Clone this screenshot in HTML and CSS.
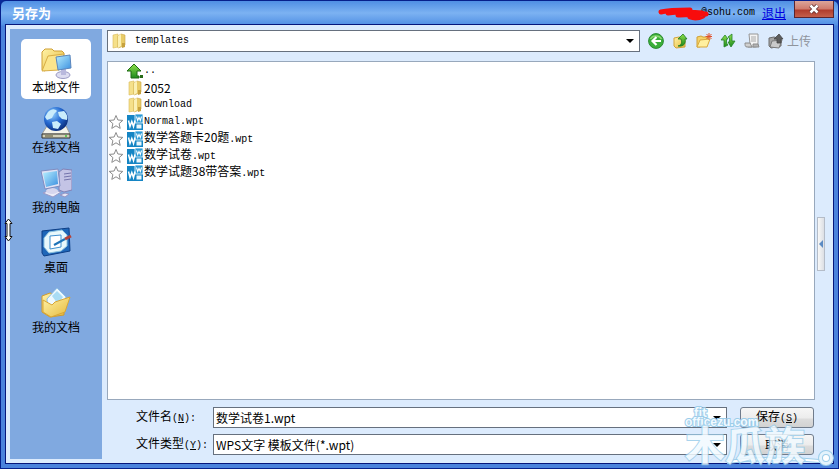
FILE: index.html
```html
<!DOCTYPE html>
<html lang="zh-CN">
<head>
    <meta charset="UTF-8">
    <meta name="viewport" content="width=device-width, initial-scale=1.0">
    <title>另存为</title>
    <link rel="stylesheet" href="styles.css">
</head>
<body>

    <!-- shared icons -->
    <svg width="0" height="0" class="defs" aria-hidden="true">
        <defs>
            <linearGradient id="gold" x1="0" y1="0" x2="1" y2="1">
                <stop offset="0" stop-color="#fff3a8"/>
                <stop offset="1" stop-color="#e6b93c"/>
            </linearGradient>
            <linearGradient id="screen" x1="0" y1="0" x2="1" y2="1">
                <stop offset="0" stop-color="#b8f0ff"/>
                <stop offset="1" stop-color="#3a8fe0"/>
            </linearGradient>
            <linearGradient id="green" x1="0" y1="0" x2="0" y2="1">
                <stop offset="0" stop-color="#8fe04a"/>
                <stop offset="1" stop-color="#1c8a1c"/>
            </linearGradient>
            <radialGradient id="globe" cx="0.35" cy="0.3" r="0.8">
                <stop offset="0" stop-color="#8fd0ff"/>
                <stop offset="0.5" stop-color="#2468d0"/>
                <stop offset="1" stop-color="#06246e"/>
            </radialGradient>
            <symbol id="folder" viewBox="0 0 16 16">
                <path d="M2 2l5-1v13l-5 1z" fill="#f5e08a" stroke="#d8bb58" stroke-width=".6"/>
                <path d="M7 3l3-2 4 1v10l-4 2-3 1z" fill="#e9cc68" stroke="#c9a444" stroke-width=".6"/>
                <path d="M7 3v12l3-2V1z" fill="#fbf0b4"/>
                <path d="M11 10h3v4l-3 1z" fill="#c7a23e"/>
            </symbol>
            <symbol id="wpt" viewBox="0 0 16 16">
                <path d="M0 1h16v15H0z" fill="#1585c4"/>
                <path d="M8 0h8v9H8z" fill="#2a9ad6" stroke="#fff" stroke-width=".8"/>
                <path d="M9.500 10.500h5v4h-5z" fill="#eaf6fc"/>
                <path d="M1.500 6.500l1.500 6 1.800-5 1.700 5 1.500-6" fill="none" stroke="#fff" stroke-width="1.500"/>
                <path d="M9.500 2.500l1.200 4 1.300-3 1.300 3 1.200-4" fill="none" stroke="#fff" stroke-width="1.100"/>
            </symbol>
            <symbol id="star" viewBox="0 0 16 16">
                <path d="M8 1.500l1.900 4.500 4.900.4-3.700 3.200 1.100 4.800L8 11.800l-4.200 2.600 1.100-4.800L1.200 6.400 6.100 6z" fill="#fff" stroke="#8c8c8c"/>
            </symbol>
        </defs>
    </svg>

    <div class="dialog">
        <header class="titlebar">
            <h1>另存为</h1>
            <span class="account">@sohu.com
                <svg class="scribble" width="52" height="14" viewBox="0 0 52 14" aria-hidden="true">
                    <path d="M3 5c8-2 18-2 29-2M10 6c12-2 24-1 34 0M20 8c8 0 16-1 28-1M32 10c6 2 9 1 13-1" fill="none" stroke="#f80c0c" stroke-width="5" stroke-linecap="round"/>
                </svg>
            </span>
            <a href="#" class="logout">退出</a>
            <button class="close" aria-label="关闭">
                <svg width="12" height="10" viewBox="0 0 12 10">
                    <path d="M2.500 1.500l7 7M9.500 1.500l-7 7" stroke="#5c2a2a" stroke-width="4"/>
                    <path d="M2.500 1.500l7 7M9.500 1.500l-7 7" stroke="#fff" stroke-width="2.500"/>
                </svg>
            </button>
        </header>

        <div class="body">
            <nav class="sidebar">
                <a href="#" class="place active">
                    <svg width="32" height="32" viewBox="0 0 32 32">
                        <path d="M2 5l3-3h7l2 2h8l2 2v4L10 11 5 24l-3-1z" fill="url(#gold)" stroke="#cf9f35"/>
                        <path d="M2 24L8 9l16-2-5 16z" fill="#fbe58c" stroke="#d8ad45"/>
                        <ellipse cx="23" cy="28" rx="7" ry="3.500" fill="#dcdcf0" stroke="#9a9ac4"/>
                        <path d="M21 21h5v7h-5z" fill="#b9b9dd"/>
                        <path d="M16 10l14-2 1 13-13 2z" fill="url(#screen)" stroke="#5b86bd"/>
                    </svg>
                    <span>本地文件</span>
                </a>
                <a href="#" class="place">
                    <svg width="32" height="32" viewBox="0 0 32 32">
                        <path d="M7 19h19l4 8H2z" fill="#f4f4ea" stroke="#9c9c98"/>
                        <path d="M2 27h28v4H2z" fill="#d2d0b8" stroke="#33332c"/>
                        <path d="M5 29h8" stroke="#55502e"/>
                        <circle cx="26" cy="29" r="1" fill="#3bc03b"/>
                        <circle cx="16" cy="12" r="12" fill="url(#globe)"/>
                        <path d="M8 5c4-4 7-3 9-1l-3 3-2 4-5 2-2-3zM18 5l6-1c3 3 4 6 3 9l-5-1-3-3zM12 15l5-1 4 3-3 5-5-1z" fill="#c9ecfb"/>
                    </svg>
                    <span>在线文档</span>
                </a>
                <a href="#" class="place">
                    <svg width="32" height="32" viewBox="0 0 32 32">
                        <path d="M19 5l4-3 9 1v20l-8 2-5-2z" fill="#c4c4e6" stroke="#8282b6"/>
                        <path d="M24 7l7-1M24 10l7-1M24 13l7-1" stroke="#7474ac"/>
                        <path d="M3 26l9-4 9 3-8 5z" fill="#ececf8" stroke="#9a9ac8"/>
                        <ellipse cx="12" cy="24" rx="6" ry="3" fill="#d6d6ee"/>
                        <path d="M1 4l17-2 2 17-15 3z" fill="#dfe2f5" stroke="#7f8cc0"/>
                        <path d="M3 6l14-2 1 13-12 3z" fill="url(#screen)"/>
                        <path d="M20 28l5-2 4 1-4 3z" fill="#e6e6f4" stroke="#9494c4"/>
                    </svg>
                    <span>我的电脑</span>
                </a>
                <a href="#" class="place">
                    <svg width="32" height="32" viewBox="0 0 32 32">
                        <path d="M2 4l27-3 1 23-26 5-2-3z" fill="#1e66b8" stroke="#0e3f86"/>
                        <path d="M9 5l13-2 5 5v11l-6 5-12 2-5-6V11z" fill="#e8f8fc" stroke="#8fc4e0"/>
                        <path d="M10 9l11-1v12l-11 2z" fill="#fff" stroke="#3f8fd0"/>
                        <path d="M14 18l11-6" stroke="#1d73b8" stroke-width="2"/>
                        <path d="M25 12l6-3" stroke="#b3423a" stroke-width="3"/>
                    </svg>
                    <span>桌面</span>
                </a>
                <a href="#" class="place">
                    <svg width="32" height="32" viewBox="0 0 32 32">
                        <path d="M2 9l8-3 14 4v18l-14 2-8-5z" fill="url(#gold)" stroke="#d09b2c"/>
                        <path d="M7 12L17 1l9 9-4 13-14 2z" fill="#eef9ff" stroke="#8fc0e4"/>
                        <path d="M12 9l5-5 6 6-5 7z" fill="#a9dcf4"/>
                        <path d="M3 13l9 5 3-3 15-5-5 15-14 5-8-5z" fill="url(#gold)" stroke="#d8a636"/>
                    </svg>
                    <span>我的文档</span>
                </a>
            </nav>

            <main class="main">
                <div class="toolbar">
                    <div class="combo">
                        <svg width="16" height="16"><use href="#folder"/></svg>
                        <select class="path" aria-label="保存位置">
                            <option>templates</option>
                        </select>
                        <svg class="caret" width="8" height="4" viewBox="0 0 8 4"><path d="M0 0h8L4 4z"/></svg>
                    </div>
                    <button class="tool" aria-label="后退">
                        <svg width="16" height="16" viewBox="0 0 16 16">
                            <circle cx="8" cy="8" r="7.400" fill="#3aae3a" stroke="#2b8a30"/>
                            <path d="M2.500 6a6 5 0 0 1 11 0" fill="none" stroke="#8bd86f" stroke-width="1.500"/>
                            <path d="M13 8H5M8.500 4L4.500 8l4 4" fill="none" stroke="#fff" stroke-width="2.200"/>
                        </svg>
                    </button>
                    <button class="tool" aria-label="向上">
                        <svg width="16" height="16" viewBox="0 0 16 16">
                            <path d="M2 5l5-1 6 1v9l-9 1-2-2z" fill="url(#gold)" stroke="#d0a33a"/>
                            <path d="M6 13c4-1 4-4 3-7H6l5-5 4 5h-2c1 4-1 8-7 7z" fill="url(#green)" stroke="#1e7a1e" stroke-width=".8"/>
                        </svg>
                    </button>
                    <button class="tool" aria-label="新建文件夹">
                        <svg width="16" height="16" viewBox="0 0 16 16">
                            <path d="M1 4l4-1 2 1 5 0v3L4 14H1z" fill="#f4d36a" stroke="#cf9f35"/>
                            <path d="M1 14l3-7 10-1-3 8z" fill="#fff0a0" stroke="#d8a93e"/>
                            <path d="M13 0v7M9.500 3.500h7M10.500 1l5 5M15.500 1l-5 5" stroke="#e0502c"/>
                        </svg>
                    </button>
                    <button class="tool" aria-label="刷新">
                        <svg width="16" height="16" viewBox="0 0 16 16">
                            <path d="M4 14V7H1l4-5 3 4H6.500v4L8 12z" fill="url(#green)" stroke="#23832a" stroke-width=".8"/>
                            <path d="M12 1v7h3l-4 6-3-5h1.500V5L8 4z" fill="url(#green)" stroke="#23832a" stroke-width=".8"/>
                        </svg>
                    </button>
                    <button class="tool" aria-label="历史">
                        <svg width="16" height="16" viewBox="0 0 16 16">
                            <path d="M5 1h9v9c0 3-1 4-3 4H4l2-3z" fill="#f4f4f4" stroke="#969696"/>
                            <path d="M7 4h5M7 6h5M7 8h5" stroke="#a8a8a8"/>
                            <path d="M1 10h5l2 4H3c-2 0-2-2-2-4z" fill="#cfcfcf" stroke="#8c8c8c"/>
                            <path d="M9 11h5l1 3H9z" fill="#b4b4b4" stroke="#8c8c8c"/>
                        </svg>
                    </button>
                    <button class="tool upload">
                        <svg width="16" height="16" viewBox="0 0 16 16">
                            <path d="M1 5l5-1 7 2v7l-10 2-2-2z" fill="#a4a4a4" stroke="#6c6c6c"/>
                            <path d="M2 14l2-6 10-1-3 8z" fill="#cacaca" stroke="#7a7a7a"/>
                            <path d="M9 10V6H6l5-5 4 5h-2v4z" fill="#5c5c5c" stroke="#484848" stroke-width=".8"/>
                        </svg>
                        <span>上传</span>
                    </button>
                </div>

                <ul class="files">
                    <li>
                        <i></i>
                        <svg width="16" height="16" viewBox="0 0 16 16">
                            <path d="M4 15V8H0l7-7 7 7h-4v5h2v2z" fill="url(#green)" stroke="#1d6b12"/>
                            <path d="M13 12h3v3h-3z" fill="#276b18"/>
                        </svg>
                        <span class="mono">..</span>
                    </li>
                    <li><i></i><svg width="16" height="16"><use href="#folder"/></svg><span>2052</span></li>
                    <li><i></i><svg width="16" height="16"><use href="#folder"/></svg><span class="mono">download</span></li>
                    <li><svg width="16" height="16"><use href="#star"/></svg><svg width="16" height="16"><use href="#wpt"/></svg><span class="mono">Normal.wpt</span></li>
                    <li><svg width="16" height="16"><use href="#star"/></svg><svg width="16" height="16"><use href="#wpt"/></svg><span>数学答题卡20题<span class="mono">.wpt</span></span></li>
                    <li><svg width="16" height="16"><use href="#star"/></svg><svg width="16" height="16"><use href="#wpt"/></svg><span>数学试卷<span class="mono">.wpt</span></span></li>
                    <li><svg width="16" height="16"><use href="#star"/></svg><svg width="16" height="16"><use href="#wpt"/></svg><span>数学试题38带答案<span class="mono">.wpt</span></span></li>
                </ul>

                <form class="save-form">
                    <label for="file-name">文件名<span class="mono">(<u>N</u>):</span></label>
                    <div class="combo">
                        <input type="text" id="file-name" value="数学试卷1.wpt">
                        <svg class="caret" width="8" height="4" viewBox="0 0 8 4"><path d="M0 0h8L4 4z"/></svg>
                    </div>
                    <button type="button" class="btn">保存<span class="mono">(<u>S</u>)</span></button>

                    <label for="file-type">文件类型<span class="mono">(<u>Y</u>):</span></label>
                    <div class="combo">
                        <select id="file-type">
                            <option>WPS文字 模板文件(*.wpt)</option>
                        </select>
                        <svg class="caret" width="8" height="4" viewBox="0 0 8 4"><path d="M0 0h8L4 4z"/></svg>
                    </div>
                    <button type="button" class="btn">取消</button>
                </form>
            </main>

            <button class="splitter" aria-label="展开">
                <svg width="4" height="8" viewBox="0 0 4 8"><path d="M4 0v8L0 4z" fill="#5b8bc4"/></svg>
            </button>
        </div>

        <svg class="resize-cursor" width="9" height="24" viewBox="0 0 9 24" aria-hidden="true">
            <path d="M4.500 1L8 5.500H6v13h2L4.500 23 1 18.500h2v-13H1z" fill="#fff" stroke="#111"/>
        </svg>

        <div class="watermark" aria-hidden="true">
            <svg width="154" height="20" viewBox="0 0 154 20">
                <path d="M42 14c30-4 62-4 92-1" fill="none" stroke="#9ccdea" stroke-width="4"/>
                <path d="M42 14c30-4 62-4 92-1" fill="none" stroke="#fff" stroke-width="2"/>
                <circle cx="141" cy="10" r="7" fill="#e4f3fc" stroke="#9ccdea" stroke-width="2"/>
                <circle cx="141" cy="10" r="3" fill="#fff" stroke="#9ccdea" stroke-width="2"/>
            </svg>
            <span class="mark-top">fit</span>
            <span class="mark-url">officezu.com</span>
            <span class="mark-name">木瓜族</span>
        </div>
    </div>

</body>
</html>
```
FILE: styles.css
```css
* {
    box-sizing: border-box;
}

body {
    margin: 0;
    background: #0a2a9a;
    font-family: "Noto Sans CJK SC", sans-serif;
    font-size: 12px;
    line-height: 16px;
    color: #000;
}

button, input, select {
    font: inherit;
    color: inherit;
}

svg {
    display: block;
    flex: none;
}

.defs {
    position: absolute;
}

.mono {
    font-family: "Liberation Mono", monospace;
    font-size: 10px;
}

/* window frame */
.dialog {
    position: relative;
    display: flex;
    flex-direction: column;
    min-height: 100vh;
    padding: 0 4px 4px;
    border: 1px solid #06208c;
    border-radius: 6px 6px 0 0;
    background: linear-gradient(#4f8fe4, #7cb2f2 12px, #5290e4 24px, #4a82dc 25px);
}

.titlebar {
    display: flex;
    align-items: center;
    height: 23px;
    padding-left: 7px;
}

.titlebar h1 {
    flex: 1;
    margin: 0;
    font-size: 13px;
    font-weight: bold;
    color: #fff;
}

.account {
    position: relative;
    font-family: "Liberation Mono", monospace;
    font-size: 10px;
}

.scribble {
    position: absolute;
    right: 45px;
    top: 2px;
}

.logout {
    margin: 0 8px 0 7px;
    color: #0000e0;
}

.close {
    display: flex;
    align-items: center;
    justify-content: center;
    align-self: flex-start;
    width: 40px;
    height: 17px;
    padding: 0;
    border: 1px solid #5a2530;
    border-top: 0;
    background: linear-gradient(#dba59a, #cf7a6c 8px, #b03c2c 9px, #c4604c);
}

.body {
    flex: 1;
    display: flex;
    padding: 4px 8px 4px 4px;
    border: 1px solid #06167c;
    background: #dcebfd;
}

/* places on the left */
.sidebar {
    width: 92px;
    padding: 10px 11px;
    background: #80a9e0;
}

.place {
    display: flex;
    flex-direction: column;
    align-items: center;
    height: 60px;
    padding-top: 8px;
    border-radius: 5px;
    color: #000;
    text-decoration: none;
}

.place.active {
    background: #fff;
}

.main {
    flex: 1;
    display: flex;
    flex-direction: column;
    min-width: 0;
    margin: 1px 2px 0 5px;
}

.toolbar {
    display: flex;
    align-items: center;
    gap: 8px;
    padding-right: 4px;
}

.combo {
    flex: 1;
    display: flex;
    align-items: center;
    min-width: 0;
    height: 22px;
    padding: 0 5px 0 3px;
    border: 1px solid #66707e;
    background: #fff;
}

.combo input,
.combo select {
    flex: 1;
    min-width: 0;
    height: 18px;
    padding: 0;
    border: 0;
    outline: 0;
    background: none;
    appearance: none;
}

.combo .path {
    padding-left: 8px;
    font-family: "Liberation Mono", monospace;
    font-size: 10px;
}

.tool {
    display: flex;
    align-items: center;
    gap: 3px;
    padding: 0;
    border: 0;
    background: none;
}

.upload {
    color: #8f949c;
}

.files {
    flex: 1;
    margin: 9px 0 7px;
    padding: 0;
    border: 1px solid #98a8bc;
    background: #fff;
    list-style: none;
}

.files li {
    display: flex;
    align-items: center;
    height: 17px;
}

.files li > :first-child {
    width: 16px;
    margin-right: 3px;
}

.files li > :last-child {
    margin-left: 1px;
}

/* file name / type */
.save-form {
    display: grid;
    grid-template-columns: 77px 1fr 74px;
    row-gap: 6px;
    align-items: center;
    padding: 0 1px 4px 29px;
}

.save-form .combo {
    height: 21px;
    margin-right: 13px;
    padding-left: 2px;
}

.btn {
    height: 21px;
    padding: 0;
    border: 1px solid #707c8c;
    border-radius: 3px;
    background: linear-gradient(#f6f6f6, #ececec 10px, #dcdcdc 11px, #d2d2d2);
}

.splitter {
    display: flex;
    align-items: center;
    justify-content: center;
    align-self: center;
    width: 8px;
    height: 54px;
    padding: 0;
    border: 1px solid #b4bcc8;
    background: linear-gradient(to right, #f8f8f8, #dcdfe4);
}

.resize-cursor {
    position: absolute;
    left: 3px;
    top: 217px;
}

/* site mark over the bottom right corner */
.watermark {
    position: absolute;
    right: -1px;
    bottom: 0;
    width: 154px;
    height: 62px;
    color: #f2faff;
    font-weight: bold;
    pointer-events: none;
    -webkit-text-stroke: 2px #9ccdea;
    paint-order: stroke fill;
}

.watermark > * {
    position: absolute;
    left: 0;
}

.mark-top {
    top: 0;
    margin-left: 9px;
    line-height: 12px;
}

.mark-url {
    top: 10px;
    font-family: "Liberation Sans", sans-serif;
    line-height: 12px;
}

.mark-name {
    top: 17px;
    font-size: 40px;
    line-height: 40px;
    opacity: .85;
}

.watermark svg {
    bottom: 0;
}
```
